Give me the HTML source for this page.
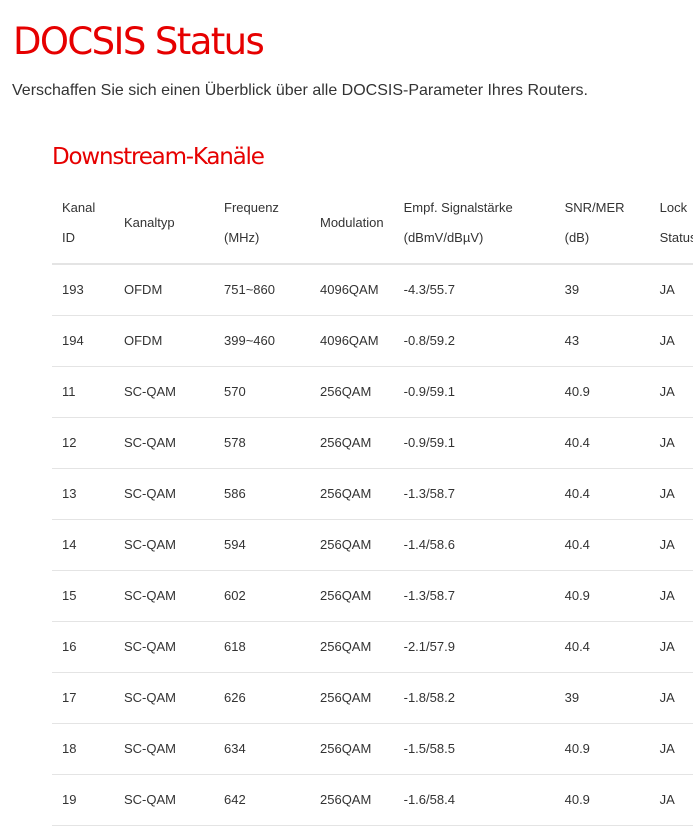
<!DOCTYPE html>
<html><head><meta charset="utf-8"><style>
html,body{margin:0;padding:0;width:693px;height:811px;overflow:hidden;background:#fff;font-family:"Liberation Sans",Arial,sans-serif;color:#333}
h1{position:absolute;left:13px;top:17px;margin:0;font-family:"DejaVu Sans","Liberation Sans",sans-serif;font-weight:normal;font-size:37px;color:#e60000;letter-spacing:-1.6px;line-height:50px}
p{position:absolute;left:12px;top:81px;margin:0;font-size:16px;color:#333;line-height:20px}
h2{position:absolute;left:52px;top:141px;margin:0;font-family:"DejaVu Sans","Liberation Sans",sans-serif;font-weight:normal;font-size:23px;color:#e60000;letter-spacing:-1.2px;line-height:32px}
table{position:absolute;left:52px;top:189px;border-collapse:collapse;font-size:13px;width:700px}
th{font-weight:normal;text-align:left;line-height:30px;padding:0 10px 6px 10px;vertical-align:middle;border-bottom:2px solid #e4e4e4;height:75px;box-sizing:border-box}
td{height:51px;padding:0 10px;border-bottom:1px solid #e4e4e4;box-sizing:border-box;vertical-align:middle}
</style></head><body>
<h1>DOCSIS Status</h1>
<p>Verschaffen Sie sich einen Überblick über alle DOCSIS-Parameter Ihres Routers.</p>
<h2>Downstream-Kanäle</h2>
<table>
<colgroup><col style="width:62px"><col style="width:100px"><col style="width:96px"><col style="width:83px"><col style="width:161px"><col style="width:95px"><col></colgroup>
<tr><th>Kanal<br>ID</th><th>Kanaltyp</th><th>Frequenz<br>(MHz)</th><th>Modulation</th><th>Empf. Signalstärke<br>(dBmV/dBµV)</th><th>SNR/MER<br>(dB)</th><th>Lock<br>Status</th></tr>
<tr><td>193</td><td>OFDM</td><td>751~860</td><td>4096QAM</td><td>-4.3/55.7</td><td>39</td><td>JA</td></tr>
<tr><td>194</td><td>OFDM</td><td>399~460</td><td>4096QAM</td><td>-0.8/59.2</td><td>43</td><td>JA</td></tr>
<tr><td>11</td><td>SC-QAM</td><td>570</td><td>256QAM</td><td>-0.9/59.1</td><td>40.9</td><td>JA</td></tr>
<tr><td>12</td><td>SC-QAM</td><td>578</td><td>256QAM</td><td>-0.9/59.1</td><td>40.4</td><td>JA</td></tr>
<tr><td>13</td><td>SC-QAM</td><td>586</td><td>256QAM</td><td>-1.3/58.7</td><td>40.4</td><td>JA</td></tr>
<tr><td>14</td><td>SC-QAM</td><td>594</td><td>256QAM</td><td>-1.4/58.6</td><td>40.4</td><td>JA</td></tr>
<tr><td>15</td><td>SC-QAM</td><td>602</td><td>256QAM</td><td>-1.3/58.7</td><td>40.9</td><td>JA</td></tr>
<tr><td>16</td><td>SC-QAM</td><td>618</td><td>256QAM</td><td>-2.1/57.9</td><td>40.4</td><td>JA</td></tr>
<tr><td>17</td><td>SC-QAM</td><td>626</td><td>256QAM</td><td>-1.8/58.2</td><td>39</td><td>JA</td></tr>
<tr><td>18</td><td>SC-QAM</td><td>634</td><td>256QAM</td><td>-1.5/58.5</td><td>40.9</td><td>JA</td></tr>
<tr><td>19</td><td>SC-QAM</td><td>642</td><td>256QAM</td><td>-1.6/58.4</td><td>40.9</td><td>JA</td></tr>
</table>
</body></html>
